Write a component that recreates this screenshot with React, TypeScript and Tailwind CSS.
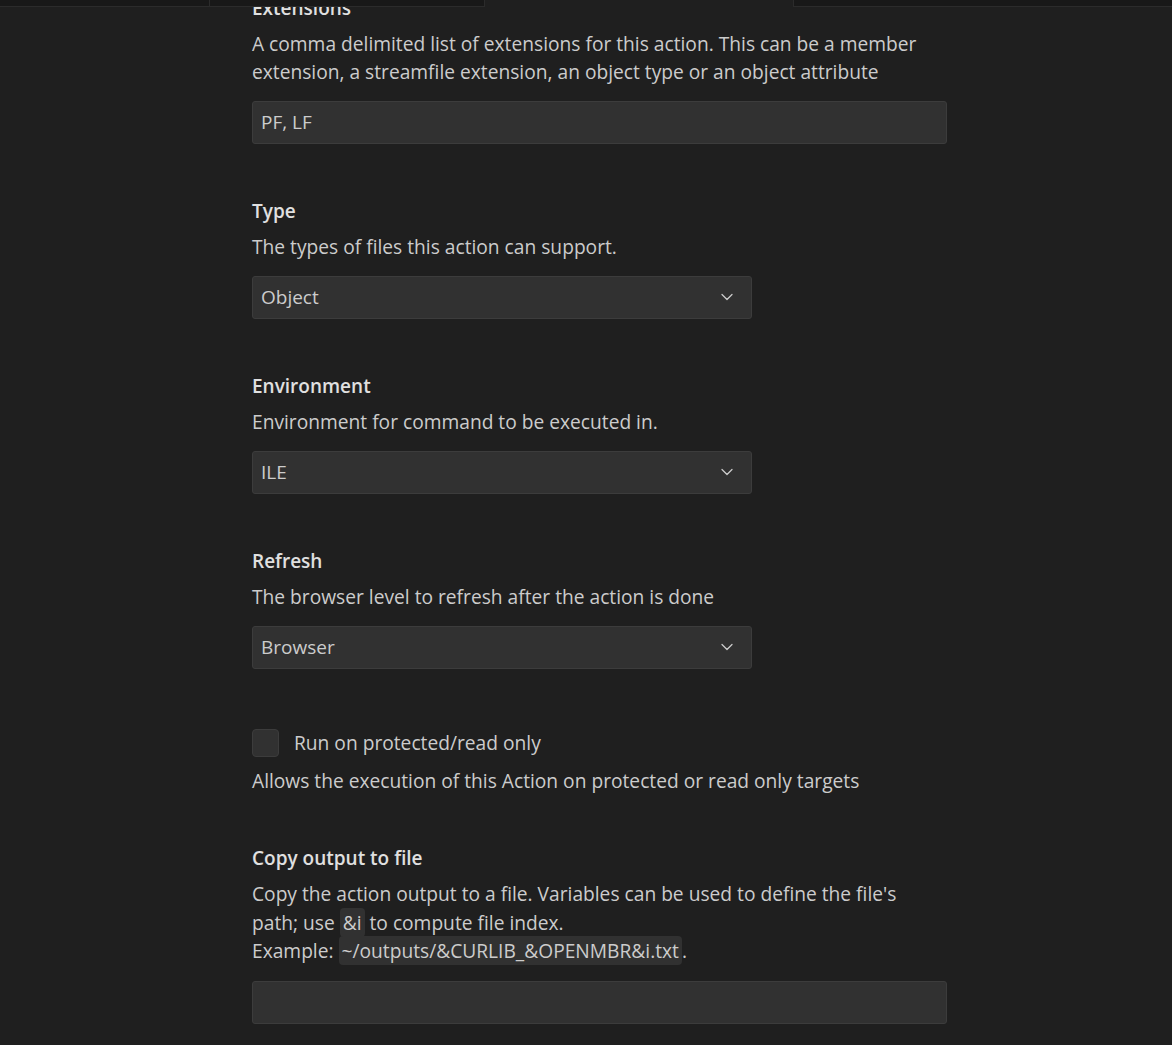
import { ChevronDown } from "lucide-react";

const font = { fontFamily: '"Open Sans", "Noto Sans", sans-serif' };

function Label({ children }: { children: React.ReactNode }) {
  return (
    <div className="mb-[7px] text-[19px] font-semibold leading-[29px] text-[#e0e0e0]">
      {children}
    </div>
  );
}

function Desc({ children }: { children: React.ReactNode }) {
  return <div className="text-[19.2px] leading-[28.5px] text-[#cccccc]">{children}</div>;
}

function TextInput({ value }: { value: string }) {
  return (
    <div className="flex h-[43px] w-[695px] items-center rounded-[3px] border border-[#3c3c3c] bg-[#313131] px-[8px] text-[19px] text-[#cccccc]">
      {value}
    </div>
  );
}

function Select({ value }: { value: string }) {
  return (
    <div className="flex h-[43px] w-[500px] items-center justify-between rounded-[3px] border border-[#3c3c3c] bg-[#313131] pl-[8px] pr-[14px] text-[19px] text-[#cccccc]">
      <span>{value}</span>
      <ChevronDown size={20} strokeWidth={1.5} className="text-[#cccccc]" />
    </div>
  );
}

function Code({ children }: { children: React.ReactNode }) {
  return <span className="rounded-[4px] bg-[#313131] px-[3px] py-[1px]">{children}</span>;
}

export default function App() {
  return (
    <div className="relative h-[1045px] w-full overflow-hidden bg-[#1f1f1f]" style={font}>
      {/* tab strip */}
      <div className="absolute left-0 right-0 top-0 z-10 flex h-[7px]">
        <div className="h-full w-[210px] border-b border-r border-[#2b2b2b] bg-[#181818]" />
        <div className="h-full w-[275px] border-b border-r border-[#2b2b2b] bg-[#181818]" />
        <div className="h-full w-[308px] bg-[#1f1f1f]" />
        <div className="h-full flex-1 border-b border-l border-[#2b2b2b] bg-[#181818]" />
      </div>

      <div className="ml-[252px] mt-[-6.5px] w-[695px]">
        <Label>Extensions</Label>
        <Desc>
          A comma delimited list of extensions for this action. This can be a member
          extension, a streamfile extension, an object type or an object attribute
        </Desc>
        <div className="mt-[14px]">
          <TextInput value="PF, LF" />
        </div>

        <div className="mt-[53px]">
          <Label>Type</Label>
          <Desc>The types of files this action can support.</Desc>
          <div className="mt-[14.5px]">
            <Select value="Object" />
          </div>
        </div>

        <div className="mt-[53px]">
          <Label>Environment</Label>
          <Desc>Environment for command to be executed in.</Desc>
          <div className="mt-[14.5px]">
            <Select value="ILE" />
          </div>
        </div>

        <div className="mt-[53px]">
          <Label>Refresh</Label>
          <Desc>The browser level to refresh after the action is done</Desc>
          <div className="mt-[14.5px]">
            <Select value="Browser" />
          </div>
        </div>

        <div className="mt-[60px]">
          <div className="flex h-[29px] items-center gap-[15px]">
            <div className="h-[28px] w-[27px] rounded-[4px] border border-[#3c3c3c] bg-[#313131]" />
            <span className="text-[19.2px] text-[#cccccc]">Run on protected/read only</span>
          </div>
          <div className="mt-[9px]">
            <Desc>Allows the execution of this Action on protected or read only targets</Desc>
          </div>
        </div>

        <div className="mt-[49px]">
          <Label>Copy output to file</Label>
          <Desc>
            Copy the action output to a file. Variables can be used to define the file's
            path; use <Code>&amp;i</Code> to compute file index.
            <br />
            Example: <Code>~/outputs/&amp;CURLIB_&amp;OPENMBR&amp;i.txt</Code>.
          </Desc>
          <div className="mt-[15px]">
            <TextInput value="" />
          </div>
        </div>
      </div>
    </div>
  );
}
